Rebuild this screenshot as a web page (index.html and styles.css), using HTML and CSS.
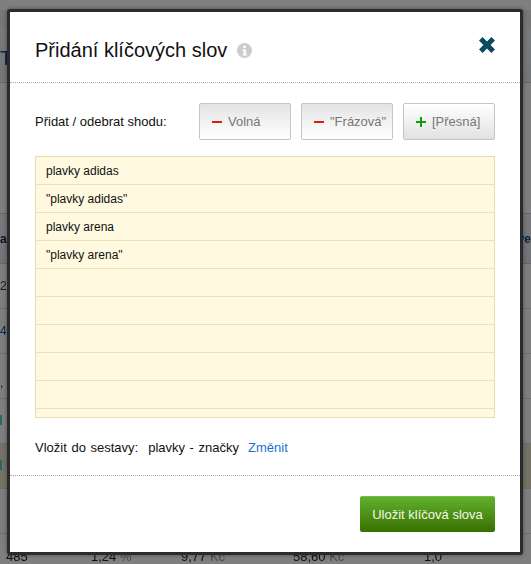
FILE: index.html
```html
<!DOCTYPE html>
<html lang="cs">
<head>
  <meta charset="UTF-8" />
  <meta name="viewport" content="width=device-width, initial-scale=1.0"/>
  <title>Přidání klíčových slov</title>
  <link rel="stylesheet" href="styles.css">
</head>
<body>

  <!-- Stranka pod overlayem -->
  <div class="page">
    <div class="page-top"></div>
    <div class="page-title">T</div>
    <div class="page-gap"></div>
    <div class="page-head"><span>az</span><span class="blue">ve</span></div>
    <div class="page-row"><span>2 :</span></div>
    <div class="page-row"><span class="blue">4 :</span></div>
    <div class="page-row"><span>&nbsp;&nbsp;&nbsp;2<br>, 6</span></div>
    <div class="page-row"><span><i class="tag"></i>&nbsp;&nbsp;6</span></div>
    <div class="page-row hilite"><span><i class="tag"></i>&nbsp;&nbsp;4</span></div>
    <div class="page-row"><span>&nbsp;&nbsp;3</span></div>
    <div class="page-last">
      <span>485</span>
      <span>1,24 <em>%</em></span>
      <span>9,77 <em>Kč</em></span>
      <span>58,60 <em>Kč</em></span>
      <span>1,0</span>
    </div>
  </div>
  <div class="overlay"></div>

  <div class="modal">
    <div class="modal-header">
      <h2>Přidání klíčových slov</h2>
      <svg class="info-icon" width="15" height="15" viewBox="0 0 15 15">
        <circle cx="7.5" cy="7.5" r="7.5" fill="#ccc"/>
        <rect x="6.2" y="2.6" width="2.6" height="2.4" fill="#fff"/>
        <path d="M5.6 6.2h3.2v5h1v1.4H5.6v-1.4h.9V7.6h-.9z" fill="#fff"/>
      </svg>
      <svg class="close-icon" width="16" height="16" viewBox="0 0 16 16">
        <path d="M3.6 0L8 4.4 12.4 0 16 3.6 11.6 8 16 12.4 12.4 16 8 11.6 3.6 16 0 12.4 4.4 8 0 3.6z" fill="#0b4a60"/>
      </svg>
    </div>

    <div class="modal-body">
      <div class="match-row">
        <span class="match-label">Přidat / odebrat shodu:</span>
        <div class="match-btn">
          <svg width="10" height="10" viewBox="0 0 10 10"><rect y="4" width="10" height="2" fill="#d42400"/></svg>
          Volná
        </div>
        <div class="match-btn">
          <svg width="10" height="10" viewBox="0 0 10 10"><rect y="4" width="10" height="2" fill="#d42400"/></svg>
          "Frázová"
        </div>
        <div class="match-btn on">
          <svg width="10" height="10" viewBox="0 0 10 10"><path d="M4 0h2v4h4v2H6v4H4V6H0V4h4z" fill="#0aa00a"/></svg>
          [Přesná]
        </div>
      </div>

      <div class="keywords">
        <div class="kw">plavky adidas</div>
        <div class="kw">"plavky adidas"</div>
        <div class="kw">plavky arena</div>
        <div class="kw">"plavky arena"</div>
        <div class="kw"></div>
        <div class="kw"></div>
        <div class="kw"></div>
        <div class="kw"></div>
        <div class="kw"></div>
        <div class="kw"></div>
      </div>

      <div class="target-row">
        <span>Vložit do sestavy:</span>
        <span class="target-name">plavky - značky</span>
        <a href="#" class="target-change">Změnit</a>
      </div>
    </div>

    <div class="modal-footer">
      <button class="save-btn">Uložit klíčová slova</button>
    </div>
  </div>

</body>
</html>
```

FILE: styles.css
```css
html, body {
  overflow: hidden;
}

body {
  margin: 0;
  padding: 0;
  height: 564px;
  font-family: "Liberation Sans", Arial, sans-serif;
  background: #fff;
  color: #111;
}

.page {
  color: #333;
  font-size: 12px;
  filter: blur(0.5px);
}

.page-top {
  height: 10px;
  background: #fff;
}

.page-title {
  height: 73px;
  box-sizing: border-box;
  padding-top: 18px;
  background: linear-gradient(#f2f4f8, #e8ecf2);
  border-top: 20px solid #eee;
  border-bottom: 1px solid #ccd;
  color: #0b4a90;
  font-size: 20px;
  line-height: 20px;
}

.page-gap {
  height: 130px;
}

.page-head {
  height: 51px;
  box-sizing: border-box;
  background: linear-gradient(#f0f3f8, #e2e6ee);
  border-top: 1px solid #ccc;
  border-bottom: 1px solid #ccc;
  display: flex;
  justify-content: space-between;
  align-items: center;
  font-weight: bold;
  color: #124;
}

.page-row {
  height: 45px;
  box-sizing: border-box;
  border-bottom: 1px solid #ddd;
  display: flex;
  align-items: center;
}

.page-row.hilite {
  background: #e9e7cc;
}

.blue {
  color: #0b4a90;
}

.tag {
  display: inline-block;
  width: 2px;
  height: 10px;
  background: #5cc;
}

.page-last {
  height: 30px;
  box-sizing: border-box;
  padding: 15px 0 0 6px;
  display: grid;
  grid-template-columns: 85px 90px 112px 131px auto;
  color: #222;
  font-size: 13px;
  line-height: 15px;
}

.page-last em {
  font-style: normal;
  color: #999;
}

.overlay {
  position: absolute;
  top: 0; left: 0;
  width: 100%; height: 100%;
  background: rgba(0,0,0,0.5);
}

.modal {
  position: absolute;
  top: 9px; left: 7px;
  width: 510px;
  border: 3px solid #2b2b2b;
  border-radius: 3px;
  background: #fff;
  box-shadow: 0 0 4px rgba(0,0,0,0.4);
}

.modal-header {
  height: 70px;
  padding: 0 25px;
  display: flex;
  align-items: center;
  border-bottom: 1px dotted #aaa;
}

.modal-header h2 {
  margin: 6px 0 0;
  font-size: 20px;
  font-weight: normal;
  color: #111;
}

.info-icon {
  margin-left: 10px;
  margin-top: 7px;
}

.close-icon {
  margin-left: auto;
  margin-top: -4px;
}

.modal-body {
  padding: 20px 25px 0;
  font-size: 13px;
}

.match-row {
  display: flex;
  align-items: center;
  gap: 10px;
}

.match-label {
  flex: 1;
}

.match-btn {
  width: 92px;
  height: 37px;
  box-sizing: border-box;
  padding-left: 12px;
  display: flex;
  align-items: center;
  gap: 6px;
  border: 1px solid #c4c4c4;
  border-radius: 2px;
  background: linear-gradient(#e4e4e4, #fff);
  color: #777;
  white-space: nowrap;
}

.match-btn.on {
  background: linear-gradient(#fff, #e2e2e2);
}

.keywords {
  margin-top: 16px;
  height: 262px;
  box-sizing: border-box;
  overflow: hidden;
  border: 1px solid #e6dcb0;
  background: #fef9df;
  font-size: 12px;
}

.kw {
  height: 28px;
  box-sizing: border-box;
  padding-left: 10px;
  line-height: 29px;
  border-bottom: 1px solid #ebe2bc;
}

.target-row {
  height: 57px;
  box-sizing: border-box;
  padding-top: 2px;
  display: flex;
  align-items: center;
  word-spacing: 1px;
}

.target-name {
  margin-left: 10px;
}

.target-change {
  margin-left: 9px;
  color: #1a6fd6;
  text-decoration: none;
}

.modal-footer {
  border-top: 1px dotted #aaa;
  padding: 20px 25px;
  display: flex;
  justify-content: flex-end;
}

.save-btn {
  width: 135px;
  height: 36px;
  border: none;
  border-top: 1px solid #74bb45;
  border-radius: 2px;
  background: linear-gradient(#62b02e, #387000);
  color: #f2f8ea;
  font-family: inherit;
  font-size: 13px;
  padding: 0;
}
```
